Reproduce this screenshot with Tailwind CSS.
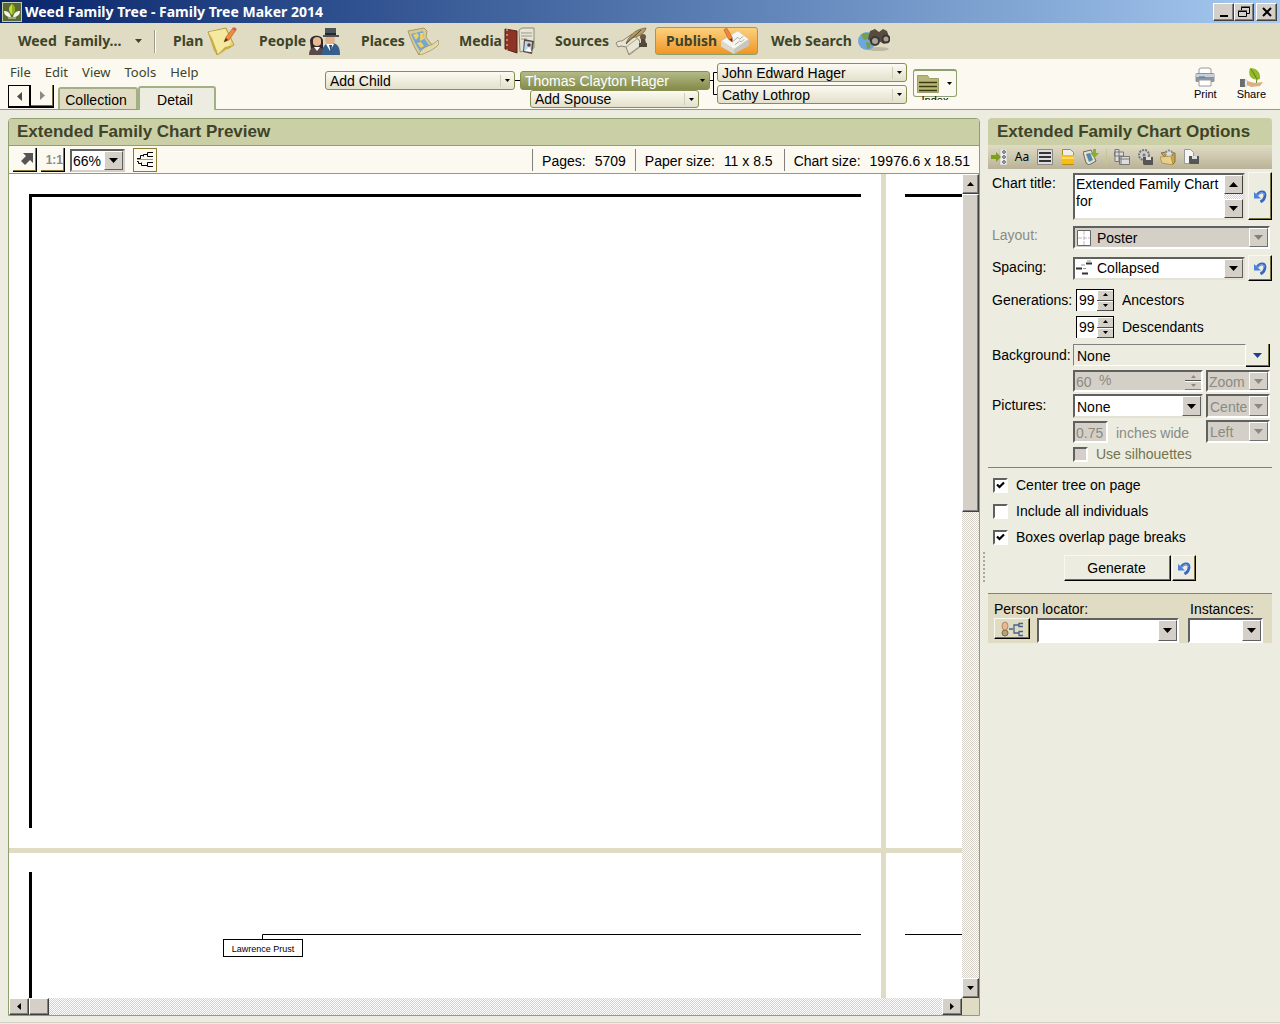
<!DOCTYPE html>
<html lang="en">

<head>
    <meta charset="UTF-8" />
    <meta name="viewport" content="width=device-width, initial-scale=1.0" />
    <title>Weed Family Tree - Family Tree Maker 2014</title>
    <script src="https://cdn.jsdelivr.net/npm/@tailwindcss/browser@4"></script>
</head>

<body class="bg-[#ecede0] font-['Liberation_Sans',sans-serif] text-sm text-black">
    <!-- Shared icons -->
    <svg class="hidden">
        <symbol id="down" viewBox="0 0 9 5"><path d="M0 0h9L4.5 5z" fill="currentColor" /></symbol>
        <symbol id="up" viewBox="0 0 9 5"><path d="M0 5h9L4.5 0z" fill="currentColor" /></symbol>
        <symbol id="left" viewBox="0 0 5 9"><path d="M5 0v9L0 4.5z" fill="currentColor" /></symbol>
        <symbol id="right" viewBox="0 0 5 9"><path d="M0 0v9l5-4.500z" fill="currentColor" /></symbol>
        <symbol id="tick" viewBox="0 0 9 9"><path d="M1 3.500l2.500 2.500L8 1.500" fill="none" stroke="#000" stroke-width="2.200" /></symbol>
        <symbol id="undo" viewBox="0 0 14 14">
            <path d="M4 6C7 1.500 12 2 12 6c0 3-1 5-4.500 7" fill="none" stroke="#3a66c0" stroke-width="2.800" />
            <path d="M4.500 6C7.500 2.500 11 3 11.500 6" fill="none" stroke="#7fa8ec" />
            <path d="M1 3v6.500h7z" fill="#4d80dc" />
        </symbol>
    </svg>

    <div class="flex min-h-screen flex-col">
        <!-- Title bar -->
        <header class="flex h-[23px] shrink-0 items-center bg-linear-to-r from-[#0a246a] to-[#a6caf0] px-[2px] font-['Noto_Sans',sans-serif] text-white">
            <svg class="mr-[3px] h-5 w-5" viewBox="0 0 20 20">
                <rect x=".5" y=".5" width="19" height="19" fill="#5b6a35" stroke="#c3cba5" />
                <path d="M10 2c4 3 4 7 0 11C6 9 6 5 10 2z" fill="#c6dc3a" />
                <path d="M10 2c4 3 4 7 0 11z" fill="#8bab22" />
                <path d="M2 9c4 0 6 2 7 6-4 0-7-2-7-6zM18 9c-4 0-6 2-7 6 4 0 7-2 7-6z" fill="#f3f5e4" />
                <path d="M6 16h8" stroke="#dfe6bd" />
            </svg>
            <h1 class="text-sm leading-5 font-bold">Weed Family Tree - Family Tree Maker 2014</h1>
            <div class="ml-auto flex pr-[1px] text-black">
                <button aria-label="Minimize" class="flex h-[18px] w-[21px] items-center justify-center border border-t-white border-r-[#404040] border-b-[#404040] border-l-white bg-[#d4d0c8] shadow-[inset_-1px_-1px_#808080]">
                    <svg class="h-3 w-3" viewBox="0 0 12 12"><path d="M2 9h8v2H2z" /></svg>
                </button>
                <button aria-label="Restore" class="flex h-[18px] w-[20px] items-center justify-center border border-t-white border-r-[#404040] border-b-[#404040] border-l-white bg-[#d4d0c8] shadow-[inset_-1px_-1px_#808080]">
                    <svg class="h-3 w-3" viewBox="0 0 12 12" fill="none" stroke="#000"><path d="M3.500 4V1.500h8v6H9M3 1h9" /><path d="M.5 5.500h8v5h-8zM0 5h9" /></svg>
                </button>
                <button aria-label="Close" class="ml-[2px] flex h-[18px] w-[21px] items-center justify-center border border-t-white border-r-[#404040] border-b-[#404040] border-l-white bg-[#d4d0c8] shadow-[inset_-1px_-1px_#808080]">
                    <svg class="h-3 w-3" viewBox="0 0 12 12" stroke="#000" stroke-width="2"><path d="M2 2l8 8M10 2l-8 8" /></svg>
                </button>
            </div>
        </header>

        <!-- Workspace toolbar -->
        <nav class="flex h-9 shrink-0 items-center bg-[#e0dcc4] font-['Noto_Sans',sans-serif] text-sm font-bold whitespace-nowrap text-[#3d4429]">
            <button class="flex w-[154px] items-center justify-between pr-3 pl-[18px] whitespace-pre">Weed  Family...<svg class="h-[4px] w-[7px]"><use href="#down" /></svg></button>
            <div class="h-[23px] w-[2px] border-l border-[#9c9a8c] bg-white"></div>
            <button class="ml-[5px] flex w-[86px] items-center justify-between px-3 pr-[10px]">Plan
                <svg class="-my-1 h-7 w-[30px]" viewBox="0 0 30 28">
                    <path d="M1 5l18-4 8 17-17 10z" fill="#e9d576" stroke="#b59b3e" />
                    <path d="M3 9l-1-4 16-3 6 12-4 9-9 4z" fill="#f5e9a0" /><path d="M1 5l4 6 6 16-4-3z" fill="#c8ac48" /><path d="M18 20l9-2-17 10z" fill="#c8ac48" />
                    <path d="M17 15l2-5 7-9 3 2-7 10z" fill="#f08a3c" stroke="#a85a25" stroke-width=".6" /><path d="M17 15l2-4 2 2z" fill="#3a3020" /><path d="M25 2l2-2 3 2-2 2z" fill="#d65f50" />
                </svg>
            </button>
            <button class="flex w-[102px] items-center justify-between px-3 pr-[9px]">People
                <svg class="-my-1 h-7 w-[31px]" viewBox="0 0 31 28">
                    <path d="M1 14c0-7 13-7 13 0v9H2z" fill="#33282a" /><path d="M4 13c0-4 8-4 8 0v3c0 4-8 4-8 0z" fill="#e9b994" /><path d="M0 28c0-7 4-8 8-8s7 2 8 8z" fill="#5b4848" /><path d="M5 20l3 4 3-4z" fill="#fff" />
                    <path d="M13 28c0-9 3-12 9-12s9 3 9 12z" fill="#355f8c" /><circle cx="21" cy="13" r="5" fill="#e4b189" /><path d="M17 17l4 7 4-7z" fill="#fff" /><path d="M20 18h3l-1 7z" fill="#244464" />
                    <path d="M16 1h11v7H16zM14 8h16v2H14z" fill="#4e5357" /><path d="M16 6h11v2H16z" fill="#22282c" />
                </svg>
            </button>
            <button class="flex w-[98px] items-center justify-between px-3 pr-[8px]">Places
                <svg class="-my-1 h-7 w-8" viewBox="0 0 32 28">
                    <path d="M1 4l16-3 3 3-1 6 6 8-13 10C7 20 4 13 1 4z" fill="#d8cb97" stroke="#9b8c58" stroke-width=".8" />
                    <path d="M4 7l12-3 1 7 5 7-9 6C9 18 6 13 4 7z" fill="#74a7d3" /><path d="M6 8l4-2 2 3-3 4zM13 6l3 0 1 6-4 2zM10 16l4-1 3 4-3 2z" fill="#ecd067" />
                    <path d="M12 27c2-5 5-6 9-8 4-1 7-3 10-6l1 4c-5 6-12 8-18 11z" fill="#e4d9a8" stroke="#9b8c58" stroke-width=".7" />
                </svg>
            </button>
            <button class="flex w-[96px] items-center justify-between px-3 pr-[8px]">Media
                <svg class="-my-1 h-7 w-[31px]" viewBox="0 0 31 28">
                    <path d="M15 3l3-2h12v20l-14 4z" fill="#e7e4d5" stroke="#8e8b78" /><path d="M17 6h11M17 9h11M17 12h6" stroke="#9b9888" />
                    <path d="M1 2l12 2v22L1 22z" fill="#8e3424" stroke="#592118" /><path d="M3 2v21" stroke="#e3d8ba" stroke-dasharray="2 3" />
                    <path d="M20 12l10 2-2 13-9-2z" fill="#5c4a3d" /><path d="M21 14l7 1-1 10-7-1z" fill="#bcd8ee" /><circle cx="25" cy="18" r="1.800" fill="#584036" /><path d="M21 24l4-4 3 5z" fill="#fff" />
                </svg>
            </button>
            <button class="flex w-[112px] items-center justify-between px-3 pr-[8px]">Sources
                <svg class="-my-1 h-7 w-8" viewBox="0 0 32 28">
                    <path d="M1 16c2-2 4-2 6-2l10-7 7 6 2 6-12 9-3-8-5-1-3 1z" fill="#e8e4d3" stroke="#8b8675" /><path d="M11 20l12-9M14 27l11-8" stroke="#a9a491" />
                    <path d="M11 16C16 6 22 2 31 1c-1 6-9 9-15 10z" fill="#b49b62" stroke="#705d36" stroke-width=".7" /><path d="M11 17L26 3" stroke="#55472b" />
                    <circle cx="28" cy="10" r="3" fill="#6a584a" /><path d="M26 12h4l1 4h1v4h-8v-4h2z" fill="#56473b" />
                </svg>
            </button>
            <button class="flex h-[28px] w-[103px] items-center justify-between rounded-[3px] border border-[#8fa070] bg-linear-to-b from-[#fbd07c] to-[#f0961c] pr-[6px] pl-[10px]">Publish
                <svg class="h-[26px] w-8" viewBox="0 0 32 28">
                    <path d="M1 14l18-10 12 9v6L15 28 1 20z" fill="#c9c6bd" /><path d="M1 14l18-11 12 9-16 11z" fill="#f6f5f0" stroke="#c0bdb2" stroke-width=".6" /><path d="M1 14l14 9v5L1 20z" fill="#dcd9d0" />
                    <path d="M13 15l6-5 2 2 4-3M16 18l5-4 2 1 3-3" fill="none" stroke="#a9a79c" /><path d="M4 2l3-2 6 10 0 5-4-3z" fill="#ee873d" stroke="#a85a25" stroke-width=".6" /><path d="M10 12l3-1v4z" fill="#4a3b2a" />
                </svg>
            </button>
            <button class="flex w-[132px] items-center justify-between pl-[13px]">Web Search
                <svg class="-my-1 h-7 w-8" viewBox="0 0 32 28">
                    <ellipse cx="20" cy="22" rx="11" ry="2" fill="#bbb8a4" /><circle cx="9" cy="14" r="9" fill="#6ea7dc" /><path d="M3 8c3-3 7-3 9 0l-2 4-4 1zM8 15l5 1-1 5-3 1z" fill="#75a04f" />
                    <path d="M12 4l5-2 4 3 4-3 4 2 3 9-6 4-7-4-4 4-5-5z" fill="#584c41" /><circle cx="17" cy="14" r="5" fill="#3e362f" /><circle cx="17" cy="14" r="3" fill="#a4a39d" /><circle cx="28" cy="12" r="4.500" fill="#3e362f" /><circle cx="28" cy="12" r="2.500" fill="#a4a39d" />
                </svg>
            </button>
        </nav>

        <!-- Menu, tabs and pedigree navigation -->
        <div class="flex h-[51px] shrink-0 border-b border-[#8fa070] bg-[#fcf9f1]">
            <div class="flex w-[325px] flex-col justify-between">
                <div class="flex gap-[14px] pt-1 pl-[10px] font-['Noto_Sans',sans-serif] text-[13px] leading-[18px] text-[#3d4429]">
                    <button>File</button><button>Edit</button><button>View</button><button>Tools</button><button>Help</button>
                </div>
                <div class="-mb-[1px] flex items-end pl-2">
                    <div class="mb-[2px] flex text-[#4c4c4c]">
                        <button aria-label="Back" class="flex h-[23px] w-[23px] items-center justify-center border border-r-2 border-b-2 border-black bg-[#fcf9f1]"><svg class="h-[9px] w-[7px]"><use href="#left" /></svg></button>
                        <button aria-label="Forward" class="flex h-[23px] w-[23px] items-center justify-center border-r border-b-2 border-black bg-[#fcf9f1] text-[#8c8c84] shadow-[inset_-1px_-1px_#77703a]"><svg class="h-[9px] w-[7px]"><use href="#right" /></svg></button>
                    </div>
                    <button class="mb-[1px] ml-1 h-[22px] w-20 rounded-t-[3px] border-2 border-b-0 border-[#a3b083] bg-[#e0dcc4] pt-[2px] pr-1 leading-[18px]">Collection</button>
                    <button class="h-6 w-[78px] rounded-t-[3px] border-2 border-b-0 border-[#a3b083] bg-[#ecede0] pt-[2px] pr-1 leading-[20px]">Detail</button>
                </div>
            </div>

            <div class="flex whitespace-nowrap">
                <button class="mt-3 flex h-[19px] w-[190px] items-center justify-between rounded-[3px] border border-[#85904f] bg-linear-to-b from-[#fcfaf2] to-[#e3e0cb] pl-1">Add Child<span class="flex h-3 w-[14px] items-center justify-center border-l border-[#cfcdb4]"><svg class="h-[3px] w-[5px]"><use href="#down" /></svg></span></button>
                <div class="mt-[21px] h-px w-[5px] bg-black"></div>
                <div class="pt-3">
                    <button class="flex h-[19px] w-[190px] items-center justify-between rounded-[3px] border border-[#85904f] bg-linear-to-b from-[#b4ba86] to-[#858c4b] pl-1 text-white">Thomas Clayton Hager<span class="flex w-[14px] justify-center text-black"><svg class="h-[3px] w-[5px]"><use href="#down" /></svg></span></button>
                    <button class="ml-[10px] flex h-[18px] w-[169px] items-center justify-between rounded-[3px] border border-[#85904f] bg-linear-to-b from-[#fcfaf2] to-[#e3e0cb] pl-1">Add Spouse<span class="flex h-3 w-[14px] items-center justify-center border-l border-[#cfcdb4]"><svg class="h-[3px] w-[5px]"><use href="#down" /></svg></span></button>
                </div>
                <svg class="h-[50px] w-[7px]" fill="none" stroke="#000"><path d="M0 21.500h3.500M7 13.500H3.500v22H7" /></svg>
                <div class="flex flex-col gap-[3px] pt-1">
                    <button class="flex h-[19px] w-[190px] items-center justify-between rounded-[3px] border border-[#85904f] bg-linear-to-b from-[#fcfaf2] to-[#e3e0cb] pl-1">John Edward Hager<span class="flex h-3 w-[14px] items-center justify-center border-l border-[#cfcdb4]"><svg class="h-[3px] w-[5px]"><use href="#down" /></svg></span></button>
                    <button class="flex h-[19px] w-[190px] items-center justify-between rounded-[3px] border border-[#85904f] bg-linear-to-b from-[#fcfaf2] to-[#e3e0cb] pl-1">Cathy Lothrop<span class="flex h-3 w-[14px] items-center justify-center border-l border-[#cfcdb4]"><svg class="h-[3px] w-[5px]"><use href="#down" /></svg></span></button>
                </div>
                <!-- The button's caption is cut off below its edge -->
                <div class="mt-[10px] ml-[6px] h-[31px] w-11 overflow-hidden">
                    <button aria-label="Index of individuals" class="flex h-7 w-11 items-center justify-between rounded-[3px] border border-t-2 border-[#8fa070] bg-[#fcf9f1] px-[3px]">
                        <svg class="h-5 w-[22px]" viewBox="0 0 22 20"><path d="M.5 1.500h10l2 3h9v14H.5z" fill="#b8b779" stroke="#9aa067" /><path d="M2 8.500h18M2 12.500h18M2 16.500h18" stroke="#3d3a10" stroke-width="1.500" /></svg>
                        <svg class="mr-[1px] h-[3px] w-[5px]"><use href="#down" /></svg>
                    </button>
                    <p class="text-center text-[11px] leading-[6px]">Index</p>
                </div>
            </div>

            <div class="mr-[14px] ml-auto flex gap-5 pt-2 text-[11px] leading-[14px]">
                <button class="flex flex-col items-center">
                    <svg class="h-5 w-5" viewBox="0 0 20 20"><path d="M4 7V2l2-1h8l2 1v5z" fill="#fff" stroke="#9a9a9a" /><rect x=".5" y="6" width="19" height="9" rx="1.500" fill="#8b949e" /><path d="M1 7h18v3H1z" fill="#c9d0d6" /><path d="M4 10h6" stroke="#3678b8" /><path d="M4 13h12v6H4z" fill="#fff" stroke="#9a9a9a" /></svg>
                    Print
                </button>
                <button class="flex flex-col items-center">
                    <svg class="h-5 w-6" viewBox="0 0 24 20"><path d="M11 1c5 0 11 3 10 11-7 2-13-2-10-11z" fill="#94b92c" /><path d="M12 2l6 10-1 6" fill="none" stroke="#5e7f1c" /><path d="M8 14l8 2 8-1-3 4-9 1-4-2z" fill="#dcaf83" /><path d="M1 12h5v8H1z" fill="#6a6c70" /><path d="M6 13h2v6H6z" fill="#fff" stroke="#aaa" stroke-width=".5" /></svg>
                    Share
                </button>
            </div>
        </div>

        <main class="flex flex-1 px-2 pt-2 pb-[6px]">
            <!-- Chart preview -->
            <section class="flex min-w-0 flex-1 flex-col rounded-t-[4px] border border-[#8fa070] bg-white">
                <h2 class="h-[27px] rounded-t-[3px] border-b border-[#8fa070] bg-[#cbcfa5] pl-2 text-[17px] leading-[26px] font-bold text-[#3d4429]">Extended Family Chart Preview</h2>
                <div class="flex h-7 items-center border-b border-[#8fa070] bg-[#fcf9f1] pl-1">
                    <button aria-label="Fit chart in window" class="flex h-6 w-6 items-center justify-center border-r border-b border-black pl-1 shadow-[inset_-1px_-1px_#8a7a30]">
                        <svg class="h-3 w-3" viewBox="0 0 12 12"><path d="M2 0h10v10L9 7l-5 5-4-4 5-5z" fill="#555" /></svg>
                    </button>
                    <button aria-label="Actual size" class="ml-1 flex h-6 w-6 items-center justify-end border-r border-b border-black pt-[2px] pr-[1px] text-xs leading-4 font-bold text-[#8a8a86] shadow-[inset_-1px_-1px_#8a7a30]">1:1</button>
                    <div class="mt-[2px] ml-[5px] flex h-[23px] w-[55px] border-2 border-t-[#606060] border-r-[#d4d0c8] border-b-[#d4d0c8] border-l-[#606060] bg-white">
                        <select aria-label="Zoom" class="w-[32px] appearance-none pl-[1px] outline-none"><option>66%</option></select>
                        <span class="flex flex-1 items-center justify-center border border-t-white border-r-[#606060] border-b-[#606060] border-l-white bg-[#d4d0c8]"><svg class="h-[5px] w-[9px]"><use href="#down" /></svg></span>
                    </div>
                    <button aria-label="Show page breaks" class="ml-2 flex h-6 w-6 items-center justify-center border border-[#8a7a30]">
                        <svg class="h-[18px] w-[18px] shrink-0" viewBox="0 0 18 18" fill="none" stroke="#000"><path d="M17 1.500h-5.500v4H17M11 3.500H7.500v2M7.500 4.500h-3v3H1M17 11.500h-5.500v4H17M11 14.500H5.500v-3M5.500 12.500h-3v-2H1" /><path d="M1 8.500h16" stroke="#999" /></svg>
                    </button>
                    <dl class="mr-[9px] ml-auto flex whitespace-pre">
                        <div class="flex gap-[9px] border-l border-[#808080] px-[9px]"><dt class="pt-[2px]">Pages:</dt><dd class="pt-[2px]">5709</dd></div>
                        <div class="flex gap-[9px] border-l border-[#808080] pr-[11px] pl-[9px]"><dt class="pt-[2px]">Paper size:</dt><dd class="pt-[2px]">11 x 8.5</dd></div>
                        <div class="flex gap-[9px] border-l border-[#808080] pl-[9px]"><dt class="pt-[2px]">Chart size:</dt><dd class="pt-[2px]">19976.6 x 18.51</dd></div>
                    </dl>
                </div>

                <div class="grid flex-1 grid-cols-[1fr_17px] grid-rows-[1fr_17px]">
                    <!-- Printed pages, with the gutters between them -->
                    <div class="relative overflow-hidden bg-white">
                        <svg class="absolute h-full w-full">
                            <path d="M872 0h5v2000h-5zM0 674h2000v5H0z" fill="#e0dcc4" />
                            <path d="M20 20h832v3H23v631h-3zM896 20h800v3H896zM20 698h3v800h-3z" />
                            <path d="M253.500 766v-5.500H852M896 760.500h800" fill="none" stroke="#000" />
                        </svg>
                        <div class="absolute top-[765px] left-[214px] h-[18px] w-20 border border-black bg-white text-center text-[9px] leading-[18px]">Lawrence Prust</div>
                    </div>
                    <div class="flex flex-col bg-[repeating-conic-gradient(#fff_0_25%,#d4d0c8_0_50%)] bg-[length:2px_2px]">
                        <button aria-label="Scroll up" class="flex h-5 items-center justify-center border border-t-white border-r-[#404040] border-b-[#404040] border-l-white bg-[#d4d0c8] shadow-[inset_-1px_-1px_#808080]"><svg class="h-[4px] w-[7px]"><use href="#up" /></svg></button>
                        <div class="h-[318px] border border-t-white border-r-[#404040] border-b-[#404040] border-l-white bg-[#d4d0c8] shadow-[inset_-1px_-1px_#808080]"></div>
                        <button aria-label="Scroll down" class="mt-auto flex h-5 items-center justify-center border border-t-white border-r-[#404040] border-b-[#404040] border-l-white bg-[#d4d0c8] shadow-[inset_-1px_-1px_#808080]"><svg class="h-[4px] w-[7px]"><use href="#down" /></svg></button>
                    </div>
                    <div class="flex bg-[repeating-conic-gradient(#fff_0_25%,#d4d0c8_0_50%)] bg-[length:2px_2px]">
                        <button aria-label="Scroll left" class="flex w-5 items-center justify-center border border-t-white border-r-[#404040] border-b-[#404040] border-l-white bg-[#d4d0c8] shadow-[inset_-1px_-1px_#808080]"><svg class="h-[7px] w-[4px]"><use href="#left" /></svg></button>
                        <div class="w-5 border border-t-white border-r-[#404040] border-b-[#404040] border-l-white bg-[#d4d0c8] shadow-[inset_-1px_-1px_#808080]"></div>
                        <button aria-label="Scroll right" class="ml-auto flex w-5 items-center justify-center border border-t-white border-r-[#404040] border-b-[#404040] border-l-white bg-[#d4d0c8] shadow-[inset_-1px_-1px_#808080]"><svg class="h-[7px] w-[4px]"><use href="#right" /></svg></button>
                    </div>
                    <div class="bg-[#e0dcc4]"></div>
                </div>
            </section>

            <!-- Splitter grip -->
            <div class="flex w-2 items-center justify-center">
                <div class="h-[30px] w-0 border-l-2 border-dotted border-[#aaa99c]"></div>
            </div>

            <!-- Chart options -->
            <aside class="w-[284px] shrink-0 whitespace-nowrap">
                <h2 class="h-[27px] rounded-t-[4px] bg-[#cbcfa5] pl-[9px] text-[17px] leading-[28px] font-bold text-[#3d4429]">Extended Family Chart Options</h2>
                <div class="flex h-6 items-center gap-[7px] bg-linear-to-b from-[#e0dcc4] to-[#b9b298] pl-[3px]">
                    <button aria-label="Items to include"><svg class="h-4 w-4" viewBox="0 0 16 16"><path d="M9 0h7v16H9z" fill="#eee" stroke="#aaa" stroke-width=".5" /><path d="M0 6h5V3l5 5-5 5v-3H0z" fill="#7e9e1c" /><g fill="#fff" stroke="#444"><circle cx="13" cy="3" r="1.300" /><circle cx="13" cy="8" r="1.300" /><circle cx="13" cy="13" r="1.300" /></g></svg></button>
                    <button class="w-4 text-center font-['Noto_Sans',sans-serif] text-[12px] leading-4">Aa</button>
                    <button aria-label="Box options"><svg class="h-4 w-4" viewBox="0 0 16 16"><path d="M.5.5h15v15H.500z" fill="#ddd" stroke="#888" /><path d="M2 3h12v2H2zM2 7h12v2H2zM2 11h12v2H2z" fill="#333" /></svg></button>
                    <button aria-label="Header and footer"><svg class="h-4 w-4" viewBox="0 0 16 16"><path d="M2.500.5h8l3 3v12h-11z" fill="#eee" stroke="#b08c1c" /><path d="M2 6h12v9H2z" fill="#f7be18" /><path d="M2 8h12v2H2z" fill="#fbdb62" /></svg></button>
                    <button aria-label="Insert"><svg class="h-4 w-4" viewBox="0 0 16 16"><path d="M0 3l8-2 5 11-7 4-3-2z" fill="#e7e2ce" stroke="#666" /><path d="M3 5l4-1 3 7-4 2z" fill="#5588ae" /><path d="M10 0h3v4h3l-4.500 5L7 4h3z" fill="#8aae28" /></svg></button>
                    <span class="h-4 w-px bg-[#c4c890]"></span>
                    <button aria-label="Page setup"><svg class="h-4 w-4" viewBox="0 0 16 16" fill="#ddd" stroke="#777"><path d="M1 .5h4v12H1zM.5 3h9v4h-9zM5.500 7.500h10v8h-10z" /><path d="M7 7v8M5 10h10" fill="none" /></svg></button>
                    <button aria-label="Save settings"><svg class="h-4 w-4" viewBox="0 0 16 16"><circle cx="7" cy="6" r="5" fill="#ccc" stroke="#777" stroke-width="2" stroke-dasharray="2 1" /><circle cx="7" cy="6" r="1.500" fill="#777" /><path d="M6 8h10v8H7l-1-1z" fill="#555" /><path d="M9 8h5v3H9z" fill="#ddd" /></svg></button>
                    <button aria-label="Use saved settings"><svg class="h-4 w-4" viewBox="0 0 16 16"><path d="M1 4l5-1 9 1v9l-3 3z" fill="#c9a755" stroke="#8c6f2c" /><circle cx="9" cy="5" r="3.500" fill="#ddd" stroke="#888" stroke-width="2" stroke-dasharray="2 1" /><path d="M0 8l11-1 2 9-11-2z" fill="#e8cf85" stroke="#9a7b34" stroke-width=".6" /></svg></button>
                    <button aria-label="Save chart"><svg class="h-4 w-4" viewBox="0 0 16 16"><path d="M1.500.5h6l3 3v11h-9z" fill="#f5f5f2" stroke="#999" /><path d="M6 7h10v8H7l-1-1z" fill="#555" /><path d="M9 7h5v3H9z" fill="#ddd" /></svg></button>
                </div>

                <div class="grid grid-cols-[81px_1fr] pt-[3px] pl-1 leading-[17px]">
                    <label for="title" class="pt-[3px]">Chart title:</label>
                    <div class="flex gap-[3px]">
                        <div class="mt-[1px] flex h-[47px] w-[172px] border-2 border-t-[#606060] border-r-[#e4e2d4] border-b-[#e4e2d4] border-l-[#606060] bg-white">
                            <textarea id="title" class="min-w-0 flex-1 resize-none overflow-hidden pt-[1px] pl-[1px] leading-[17px] outline-none">Extended Family Chart for</textarea>
                            <div class="flex w-[19px] flex-col justify-between bg-[repeating-conic-gradient(#fff_0_25%,#d4d0c8_0_50%)] bg-[length:2px_2px]">
                                <button aria-label="Scroll title up" class="flex h-[19px] items-center justify-center border border-t-white border-r-[#404040] border-b-[#404040] border-l-white bg-[#d4d0c8]"><svg class="h-[5px] w-[9px]"><use href="#up" /></svg></button>
                                <button aria-label="Scroll title down" class="flex h-[19px] items-center justify-center border border-t-white border-r-[#404040] border-b-[#404040] border-l-white bg-[#d4d0c8]"><svg class="h-[5px] w-[9px]"><use href="#down" /></svg></button>
                            </div>
                        </div>
                        <button aria-label="Reset title" class="flex h-12 w-6 items-center justify-center border border-t-[#f8f8f0] border-r-black border-b-black border-l-[#f8f8f0] shadow-[inset_-1px_-1px_#77703a]"><svg class="h-[14px] w-[14px]"><use href="#undo" /></svg></button>
                    </div>

                    <label for="layout" class="pt-[7px] text-[#8a8a84]">Layout:</label>
                    <div class="mt-[6px] flex h-[23px] w-[197px] items-center border-2 border-t-[#606060] border-r-white border-b-white border-l-[#606060] bg-[#d4d0c8]">
                        <svg class="mx-[2px] h-4 w-[14px] shrink-0" viewBox="0 0 14 16"><path d="M.5.5h13v15H.500z" fill="#fff" stroke="#666" /><path d="M7 1v14M1 8h12" stroke="#bbb" stroke-dasharray="4 1" /></svg>
                        <select id="layout" class="min-w-0 flex-1 appearance-none pt-[2px] pl-1 outline-none"><option>Poster</option></select>
                        <span class="flex h-full w-[19px] items-center justify-center border border-t-white border-r-[#707070] border-b-[#707070] border-l-white text-[#808080]"><svg class="h-[5px] w-[9px]"><use href="#down" /></svg></span>
                    </div>

                    <label for="spacing" class="pt-[10px]">Spacing:</label>
                    <div class="flex items-center gap-[3px] pt-[6px]">
                        <div class="flex h-[23px] w-[172px] items-center border-2 border-t-[#606060] border-r-[#e4e2d4] border-b-[#e4e2d4] border-l-[#606060] bg-white">
                            <svg class="mx-[1px] h-4 w-4 shrink-0" viewBox="0 0 16 16"><path d="M0 8.500h6M10 3.500h6M6 13.500h6" stroke="#333" stroke-width="2" /><path d="M5 5h4M11 1h4M7 8.500h3" stroke="#999" /></svg>
                            <select id="spacing" class="min-w-0 flex-1 appearance-none pl-1 outline-none"><option>Collapsed</option></select>
                            <span class="flex h-full w-[19px] items-center justify-center border border-t-white border-r-[#606060] border-b-[#606060] border-l-white bg-[#d4d0c8]"><svg class="h-[5px] w-[9px]"><use href="#down" /></svg></span>
                        </div>
                        <button aria-label="Reset spacing" class="flex h-[26px] w-6 items-center justify-center border border-t-[#f8f8f0] border-r-black border-b-black border-l-[#f8f8f0] shadow-[inset_-1px_-1px_#77703a]"><svg class="h-[14px] w-[14px]"><use href="#undo" /></svg></button>
                    </div>

                    <span class="pt-[11px]">Generations:</span>
                    <div class="flex flex-col gap-[5px] pt-2 pl-[3px]">
                        <label class="flex items-center gap-2">
                            <span class="flex h-[22px] w-[38px] border border-r-0 border-b-0 border-black bg-white">
                                <input value="99" class="w-5 pl-[2px] outline-none" />
                                <span class="flex flex-1 flex-col border-r border-black bg-[#d4d0c8]">
                                    <span class="flex flex-1 items-center justify-center border-b border-[#505050] shadow-[inset_1px_1px_#fff]"><svg class="h-[3px] w-[5px]"><use href="#up" /></svg></span>
                                    <span class="flex flex-1 items-center justify-center border-b border-[#505050] shadow-[inset_1px_1px_#fff]"><svg class="h-[3px] w-[5px]"><use href="#down" /></svg></span>
                                </span>
                            </span>
                            Ancestors
                        </label>
                        <label class="flex items-center gap-2">
                            <span class="flex h-[22px] w-[38px] border border-r-0 border-b-0 border-black bg-white">
                                <input value="99" class="w-5 pl-[2px] outline-none" />
                                <span class="flex flex-1 flex-col border-r border-black bg-[#d4d0c8]">
                                    <span class="flex flex-1 items-center justify-center border-b border-[#505050] shadow-[inset_1px_1px_#fff]"><svg class="h-[3px] w-[5px]"><use href="#up" /></svg></span>
                                    <span class="flex flex-1 items-center justify-center border-b border-[#505050] shadow-[inset_1px_1px_#fff]"><svg class="h-[3px] w-[5px]"><use href="#down" /></svg></span>
                                </span>
                            </span>
                            Descendants
                        </label>
                    </div>

                    <label for="background" class="pt-[9px]">Background:</label>
                    <div class="flex pt-[6px]">
                        <select id="background" class="h-[22px] w-[173px] appearance-none border border-t-[#808080] border-r-white border-b-white border-l-[#808080] pt-[2px] pl-[3px] outline-none"><option>None</option></select>
                        <button aria-label="Choose background" class="flex h-[23px] w-6 items-center justify-center border-r border-b border-black text-[#1c3f94] shadow-[inset_-1px_-1px_#77703a]"><svg class="h-[5px] w-[9px]"><use href="#down" /></svg></button>
                    </div>

                    <div class="col-start-2 flex gap-[3px] pt-[3px] text-[#8a8a84]">
                        <div class="flex h-[22px] w-[130px] border-2 border-t-[#606060] border-r-white border-b-white border-l-[#606060] bg-[#d4d0c8]">
                            <input aria-label="Transparency" value="60" disabled class="w-6 pt-[2px] pl-[1px]" /><span>%</span>
                            <span class="ml-auto flex w-4 flex-col">
                                <span class="flex flex-1 items-center justify-center border-b border-[#505050]"><svg class="h-[3px] w-[5px]"><use href="#up" /></svg></span>
                                <span class="flex flex-1 items-center justify-center border-b border-[#808080] shadow-[inset_0_1px_#fff]"><svg class="h-[3px] w-[5px]"><use href="#down" /></svg></span>
                            </span>
                        </div>
                        <div class="flex h-[22px] w-16 border-2 border-t-[#606060] border-r-white border-b-white border-l-[#606060] bg-[#d4d0c8]">
                            <select aria-label="Background size" disabled class="min-w-0 flex-1 appearance-none pt-[2px] pl-[1px]"><option>Zoom</option></select>
                            <span class="flex w-[19px] items-center justify-center border border-t-white border-r-[#707070] border-b-[#707070] border-l-white"><svg class="h-[5px] w-[9px]"><use href="#down" /></svg></span>
                        </div>
                    </div>

                    <label for="pictures" class="pt-[5px]">Pictures:</label>
                    <div class="flex gap-[3px] pt-[2px]">
                        <div class="flex h-[24px] w-[130px] border-2 border-t-[#606060] border-r-[#e4e2d4] border-b-[#e4e2d4] border-l-[#606060] bg-white">
                            <select id="pictures" class="min-w-0 flex-1 appearance-none pt-[2px] pl-[2px] outline-none"><option>None</option></select>
                            <span class="flex w-[19px] items-center justify-center border border-t-white border-r-[#606060] border-b-[#606060] border-l-white bg-[#d4d0c8]"><svg class="h-[5px] w-[9px]"><use href="#down" /></svg></span>
                        </div>
                        <div class="flex h-[24px] w-16 border-2 border-t-[#606060] border-r-white border-b-white border-l-[#606060] bg-[#d4d0c8] text-[#8a8a84]">
                            <select aria-label="Vertical position" disabled class="min-w-0 flex-1 appearance-none pt-[2px] pl-[2px]"><option>Cente</option></select>
                            <span class="flex w-[19px] items-center justify-center border border-t-white border-r-[#707070] border-b-[#707070] border-l-white"><svg class="h-[5px] w-[9px]"><use href="#down" /></svg></span>
                        </div>
                    </div>

                    <div class="col-start-2 flex items-center pt-[2px] text-[#8a8a84]">
                        <input id="inches" value="0.75" disabled class="h-[22px] w-[35px] border-2 border-t-[#606060] border-r-white border-b-white border-l-[#606060] bg-[#d4d0c8] pt-[2px] pl-[1px]" />
                        <label for="inches" class="w-[98px] pt-[3px] pl-2">inches wide</label>
                        <div class="flex h-[23px] w-16 border-2 border-t-[#606060] border-r-white border-b-white border-l-[#606060] bg-[#d4d0c8]">
                            <select aria-label="Horizontal position" disabled class="min-w-0 flex-1 appearance-none pt-[2px] pl-[2px]"><option>Left</option></select>
                            <span class="flex w-[19px] items-center justify-center border border-t-white border-r-[#707070] border-b-[#707070] border-l-white"><svg class="h-[5px] w-[9px]"><use href="#down" /></svg></span>
                        </div>
                    </div>
                    <label class="col-start-2 flex items-center gap-2 pt-[3px] text-[#74734c]">
                        <input type="checkbox" disabled class="h-[15px] w-[15px] appearance-none border-2 border-t-[#606060] border-r-white border-b-white border-l-[#606060] bg-[#d4d0c8]" />
                        Use silhouettes
                    </label>
                </div>

                <div class="mt-[4px] flex flex-col gap-[9px] border-t border-[#808080] pt-[9px] pl-[5px] leading-[17px]">
                    <label class="flex items-center gap-2">
                        <span class="grid h-[15px] w-[15px] place-items-center">
                            <input type="checkbox" checked class="peer col-start-1 row-start-1 h-[15px] w-[15px] appearance-none border-2 border-t-[#606060] border-r-white border-b-white border-l-[#606060] bg-white" />
                            <svg class="col-start-1 row-start-1 hidden h-[9px] w-[9px] peer-checked:block"><use href="#tick" /></svg>
                        </span>
                        Center tree on page
                    </label>
                    <label class="flex items-center gap-2">
                        <span class="grid h-[15px] w-[15px] place-items-center">
                            <input type="checkbox" class="peer col-start-1 row-start-1 h-[15px] w-[15px] appearance-none border-2 border-t-[#606060] border-r-white border-b-white border-l-[#606060] bg-white" />
                            <svg class="col-start-1 row-start-1 hidden h-[9px] w-[9px] peer-checked:block"><use href="#tick" /></svg>
                        </span>
                        Include all individuals
                    </label>
                    <label class="flex items-center gap-2">
                        <span class="grid h-[15px] w-[15px] place-items-center">
                            <input type="checkbox" checked class="peer col-start-1 row-start-1 h-[15px] w-[15px] appearance-none border-2 border-t-[#606060] border-r-white border-b-white border-l-[#606060] bg-white" />
                            <svg class="col-start-1 row-start-1 hidden h-[9px] w-[9px] peer-checked:block"><use href="#tick" /></svg>
                        </span>
                        Boxes overlap page breaks
                    </label>
                </div>

                <div class="flex justify-center gap-[1px] pt-[9px] pb-3">
                    <button class="h-[26px] w-[107px] border border-t-[#f8f8f0] border-r-black border-b-black border-l-[#f8f8f0] pr-[2px] shadow-[inset_-1px_-1px_#77703a]">Generate</button>
                    <button aria-label="Reset all" class="flex h-[26px] w-6 items-center justify-center border border-t-[#f8f8f0] border-r-black border-b-black border-l-[#f8f8f0] shadow-[inset_-1px_-1px_#77703a]"><svg class="h-[14px] w-[14px]"><use href="#undo" /></svg></button>
                </div>

                <div class="flex border-t border-[#808080] bg-[#e0dcc4] pt-[7px] pl-[6px] leading-[17px]">
                    <div class="w-[194px]">
                        <label for="person">Person locator:</label>
                        <div class="flex items-start gap-[7px]">
                            <button aria-label="Find person" class="flex h-[21px] w-9 items-center justify-center border border-t-[#f8f8f0] border-r-black border-b-black border-l-[#f8f8f0] shadow-[inset_-1px_-1px_#77703a]">
                                <svg class="h-4 w-[22px]" viewBox="0 0 22 16"><circle cx="4" cy="12" r="3" fill="#b3a27c" stroke="#776b4c" /><ellipse cx="4" cy="5" rx="3" ry="4" fill="#eab994" stroke="#9c7050" stroke-width=".7" /><path d="M8 8h4M22 2.500h-4v3h4M18 4h-5v8h5M22 10.500h-4v4h4" fill="none" stroke="#4a6288" stroke-width="1.300" /></svg>
                            </button>
                            <div class="flex h-[25px] w-[142px] border-2 border-t-[#606060] border-r-white border-b-white border-l-[#606060] bg-white">
                                <select id="person" class="min-w-0 flex-1 appearance-none outline-none"></select>
                                <span class="flex w-[19px] items-center justify-center border border-t-white border-r-[#606060] border-b-[#606060] border-l-white bg-[#d4d0c8]"><svg class="h-[5px] w-[9px]"><use href="#down" /></svg></span>
                            </div>
                        </div>
                    </div>
                    <div>
                        <label for="instances" class="pl-[2px]">Instances:</label>
                        <div class="flex h-[25px] w-[75px] border-2 border-t-[#606060] border-r-white border-b-white border-l-[#606060] bg-white">
                            <select id="instances" class="min-w-0 flex-1 appearance-none outline-none"></select>
                            <span class="flex w-[19px] items-center justify-center border border-t-white border-r-[#606060] border-b-[#606060] border-l-white bg-[#d4d0c8]"><svg class="h-[5px] w-[9px]"><use href="#down" /></svg></span>
                        </div>
                    </div>
                </div>
            </aside>
        </main>
        <footer class="h-[2px] border-t border-[#d4d0c8]"></footer>
    </div>
</body>

</html>
